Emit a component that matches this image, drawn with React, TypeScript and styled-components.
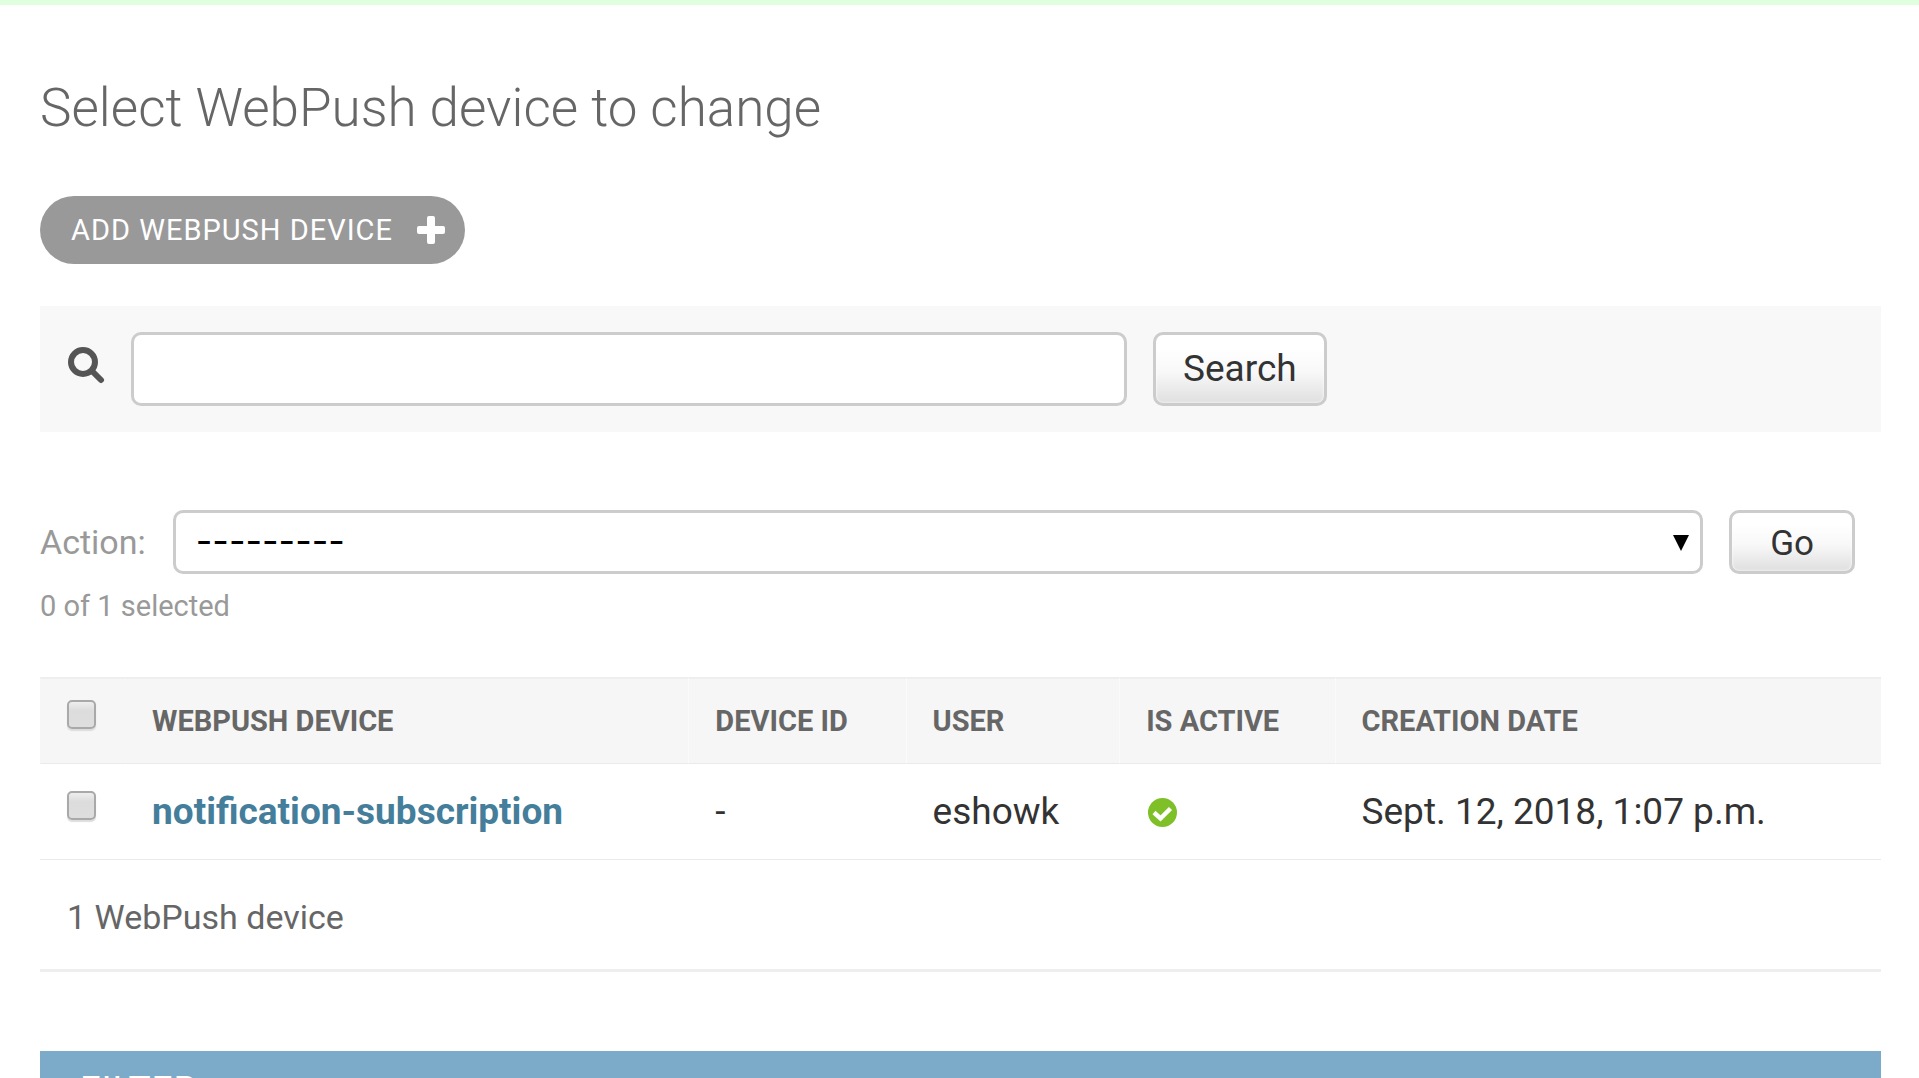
import React, { useState } from "react";
import styled, { createGlobalStyle, css } from "styled-components";

const GlobalStyle = createGlobalStyle`
  *, *::before, *::after { box-sizing: border-box; }
  body {
    margin: 0;
    background: #fff;
    color: #333;
    font-family: Roboto, "Liberation Sans", Arial, sans-serif;
    font-size: 37px;
  }
  button, input, select { font-family: inherit; margin: 0; }
`;

const MessageEdge = styled.div`
  height: 5px;
  background: #dfffdf;
`;

const Page = styled.main`
  padding: 72px 38px 0 40px;
`;

const Title = styled.h1`
  margin: 0;
  font-size: 53px;
  line-height: 62px;
  font-weight: 300;
  color: #666;
`;

const AddLink = styled.a`
  display: inline-flex;
  align-items: center;
  gap: 24px;
  height: 68px;
  margin-top: 57px;
  padding: 0 20px 0 31px;
  border-radius: 34px;
  background: #999;
  color: #fff;
  font-size: 29px;
  line-height: 34px;
  letter-spacing: 1px;
  text-decoration: none;
  text-transform: uppercase;
`;

const control = css`
  border: 3px solid #ccc;
  border-radius: 10px;
  background-color: #fff;
  outline: none;
`;

const SearchBar = styled.form`
  display: flex;
  align-items: center;
  gap: 26px;
  height: 126px;
  margin-top: 42px;
  padding: 0 27px;
  background: #f8f8f8;
`;

const SearchLabel = styled.label`
  display: flex;
  padding-bottom: 8px;
`;

const SearchInput = styled.input`
  ${control}
  flex: 0 1 996px;
  min-width: 0;
  height: 74px;
  padding: 0 18px;
  font-size: 37px;
`;

const PushButton = styled.button<{ $compact?: boolean }>`
  ${control}
  flex: none;
  height: ${(p) => (p.$compact ? 64 : 74)}px;
  padding: ${(p) => (p.$compact ? "3px 38px 0" : "0 27px 2px")};
  font-size: ${(p) => (p.$compact ? 35 : 37)}px;
  color: #333;
  background: linear-gradient(#fff 20%, #f8f8f8 55%, #dfdfdf);
  box-shadow: inset 0 0 3px #fff;
`;

const Actions = styled.form`
  display: flex;
  align-items: center;
  margin-top: 78px;
  padding-right: 26px;
`;

const ActionLabel = styled.label`
  margin-right: 27px;
  font-size: 34px;
  line-height: 41px;
  color: #999;
`;

const SelectBox = styled.div`
  position: relative;
  display: flex;
  flex: 1;
  margin-right: 26px;
`;

const ActionSelect = styled.select`
  ${control}
  flex: 1;
  appearance: none;
  height: 64px;
  padding: 0 50px 2px 20px;
  font-family: Inter, "Liberation Sans", sans-serif;
  font-size: 36px;
  color: #000;
`;

const Caret = styled.svg`
  position: absolute;
  right: 14px;
  top: 25px;
  pointer-events: none;
`;

const Counter = styled.p`
  margin: 15px 0 53px;
  font-size: 29px;
  line-height: 35px;
  color: #999;
`;

const Results = styled.table`
  width: 100%;
  table-layout: fixed;
  border-collapse: separate;
  border-spacing: 0;
`;

const Col = styled.col<{ $width?: string }>`
  width: ${(p) => p.$width ?? "auto"};
`;

const HeadCell = styled.th<{ $divided?: boolean }>`
  height: 87px;
  padding: 0 26px;
  border-top: 2px solid #eee;
  border-bottom: 1px solid #eaeaea;
  border-left: 1px solid ${(p) => (p.$divided ? "#fafafa" : "#f6f6f6")};
  background: #f6f6f6;
  text-align: left;
  font-size: 29px;
  line-height: 34px;
  font-weight: 700;
  color: #666;
  text-transform: uppercase;
`;

const Cell = styled.td`
  height: 96px;
  padding: 0 26px 0 27px;
  border-bottom: 1px solid #eaeaea;
  font-size: 37px;
  line-height: 43px;
  color: #333;
`;

const Tick = styled.input`
  appearance: none;
  display: block;
  width: 29px;
  height: 29px;
  margin-bottom: 13px;
  border: 2px solid #a9a9a9;
  border-radius: 5px;
  background: linear-gradient(#eee, #dcdcdc 35%, #dedede);
  box-shadow: 0 2px 1px #ddd;
  &:checked { background: #79aec8; }
`;

const RowLink = styled.a`
  color: #447e9b;
  font-weight: 700;
  text-decoration: none;
`;

const StatusIcon = styled.svg`
  display: block;
  margin: 2px 0 0 2px;
`;

const Paginator = styled.p`
  margin: 0;
  padding: 38px 27px 33px;
  border-bottom: 3px solid #eee;
  font-size: 34px;
  line-height: 38px;
  color: #666;
`;

const FilterTitle = styled.h2`
  margin: 79px 0 0;
  padding: 17px 40px;
  background: #7cabc9;
  color: #fff;
  font-size: 37px;
  line-height: 43px;
  font-weight: 400;
  letter-spacing: 1px;
  text-transform: uppercase;
`;

const columns = ["Device ID", "User", "Is active", "Creation date"];

export default function App() {
  const [query, setQuery] = useState("");
  const stop = (e: React.FormEvent) => e.preventDefault();

  return (
    <>
      <GlobalStyle />
      <MessageEdge />
      <Page>
        <Title>Select WebPush device to change</Title>
        <AddLink href="#add">
          Add WebPush device
          <svg width="28" height="28" viewBox="0 0 28 28" fill="#fff" aria-hidden="true">
            <rect x="10" y="0" width="8" height="28" rx="2" />
            <rect x="0" y="10" width="28" height="8" rx="2" />
          </svg>
        </AddLink>

        <SearchBar onSubmit={stop}>
          <SearchLabel htmlFor="searchbar" aria-label="Search">
            <svg width="38" height="38" viewBox="0 0 38 38" fill="none" stroke="#555" aria-hidden="true">
              <circle cx="16" cy="16" r="12" strokeWidth="6" />
              <path d="M25.5 25.5 34 34" strokeWidth="6" strokeLinecap="round" />
            </svg>
          </SearchLabel>
          <SearchInput id="searchbar" type="text" value={query} onChange={(e) => setQuery(e.target.value)} />
          <PushButton type="submit">Search</PushButton>
        </SearchBar>

        <Actions onSubmit={stop}>
          <ActionLabel htmlFor="action">Action:</ActionLabel>
          <SelectBox>
            <ActionSelect id="action" defaultValue="">
              <option value="">---------</option>
            </ActionSelect>
            <Caret width="16" height="16" viewBox="0 0 16 16" aria-hidden="true">
              <path d="M0 0h16L8 16z" />
            </Caret>
          </SelectBox>
          <PushButton type="submit" $compact>Go</PushButton>
        </Actions>
        <Counter>0 of 1 selected</Counter>

        <Results>
          <colgroup>
            <Col $width="85px" />
            <Col $width="30.6%" />
            <Col $width="11.8%" />
            <Col $width="11.6%" />
            <Col $width="11.7%" />
            <Col />
          </colgroup>
          <thead>
            <tr>
              <HeadCell scope="col"><Tick type="checkbox" aria-label="Select all" /></HeadCell>
              <HeadCell scope="col">WebPush device</HeadCell>
              {columns.map((name) => (
                <HeadCell key={name} scope="col" $divided>{name}</HeadCell>
              ))}
            </tr>
          </thead>
          <tbody>
            <tr>
              <Cell><Tick type="checkbox" aria-label="Select notification-subscription" /></Cell>
              <Cell><RowLink href="#device">notification-subscription</RowLink></Cell>
              <Cell>-</Cell>
              <Cell>eshowk</Cell>
              <Cell>
                <StatusIcon width="29" height="29" viewBox="0 0 29 29" role="img" aria-label="True">
                  <circle cx="14.5" cy="14.5" r="14.5" fill="#7fbf27" />
                  <path d="M6 14.5 12.5 20.5 22.5 10.5" fill="none" stroke="#fff" strokeWidth="4.5" />
                </StatusIcon>
              </Cell>
              <Cell>Sept. 12, 2018, 1:07 p.m.</Cell>
            </tr>
          </tbody>
        </Results>
        <Paginator>1 WebPush device</Paginator>
        <FilterTitle>Filter</FilterTitle>
      </Page>
    </>
  );
}
